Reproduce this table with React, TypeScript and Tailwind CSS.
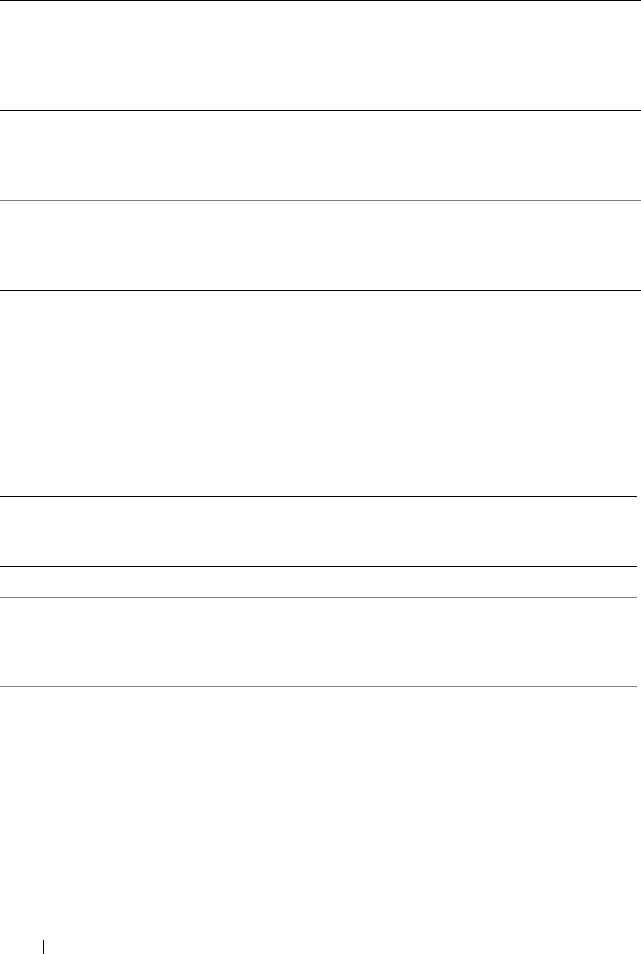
export default function App() {
  return (
    <div className="w-[641px] h-[954px] bg-white flex flex-col">
      <div className="h-[110px] border-t border-black" />
      <div className="h-[90px] border-t border-black" />
      <div className="h-[90px] border-t border-[#808080]" />
      <div className="h-[206px] border-t border-black" />
      <div className="w-[637px] h-[70px] border-t border-black" />
      <div className="w-[637px] h-[31px] border-t border-black" />
      <div className="w-[637px] h-[89px] border-t border-[#808080]" />
      <div className="w-[637px] flex-1 border-t border-[#808080] flex flex-col">
        <div className="mt-auto ml-[43px] w-px h-[14px] bg-black" />
      </div>
    </div>
  );
}
